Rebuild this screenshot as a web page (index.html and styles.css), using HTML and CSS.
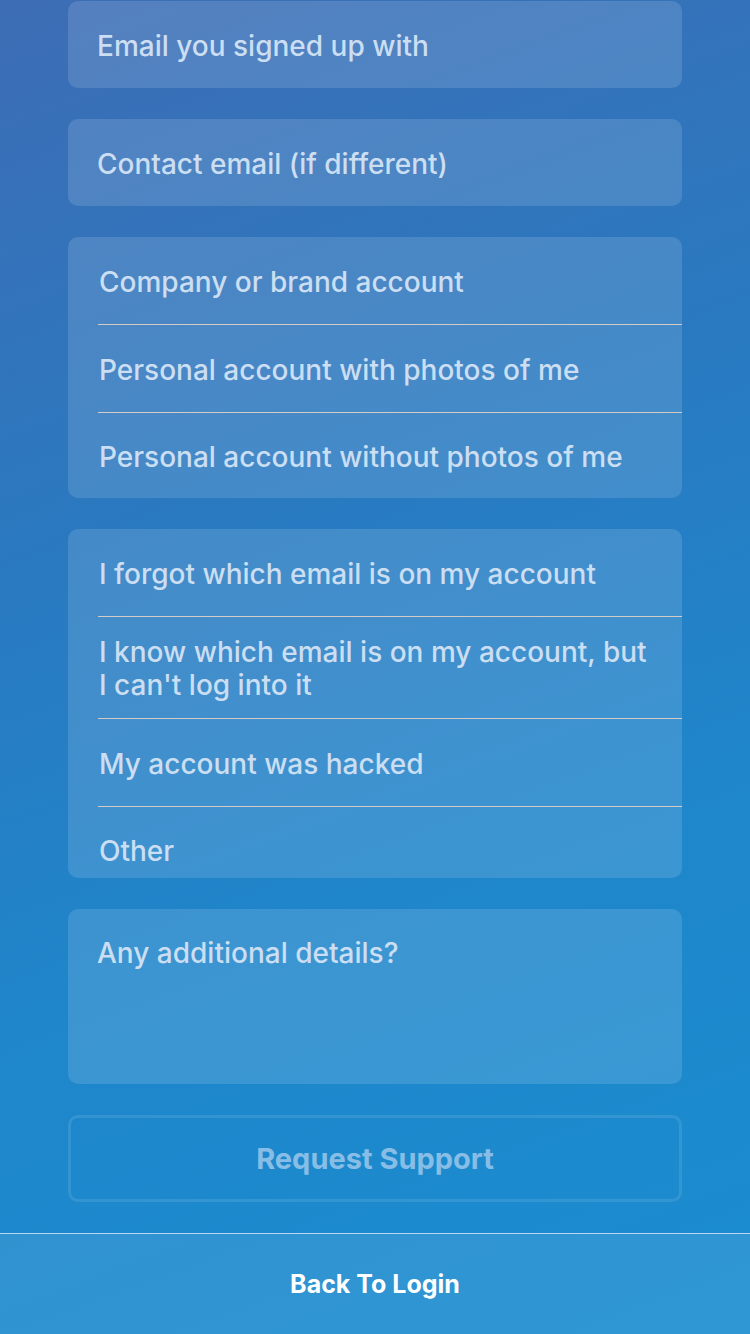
FILE: index.html
```html
<!DOCTYPE html>
<html>
<head>
<meta charset="utf-8">
<link rel="stylesheet" href="styles.css">
</head>
<body>
<div class="page">
  <main class="form">
    <div class="box field"><span class="ph">Email you signed up with</span></div>
    <div class="box field"><span class="ph">Contact email (if different)</span></div>
    <div class="box list">
      <div class="row">Company or brand account</div>
      <div class="row">Personal account with photos of me</div>
      <div class="row">Personal account without photos of me</div>
    </div>
    <div class="box list list-clip">
      <div class="row">I forgot which email is on my account</div>
      <div class="row">I know which email is on my account, but I can't log into it</div>
      <div class="row">My account was hacked</div>
      <div class="row">Other</div>
    </div>
    <div class="box area"><span class="ph">Any additional details?</span></div>
    <div class="btn">Request Support</div>
  </main>
  <footer class="footer">Back To Login</footer>
</div>
</body>
</html>
```

FILE: styles.css
```css
* { box-sizing: border-box; }
html, body { margin: 0; padding: 0; }
body {
  width: 750px;
  height: 1334px;
  overflow: hidden;
  font-family: Inter, Roboto, "Liberation Sans", sans-serif;
  background: linear-gradient(160deg, #3d6db5 0%, #2a79c0 35%, #1f86cb 65%, #1a8dd0 100%);
}
.page {
  height: 1334px;
  display: flex;
  flex-direction: column;
}
.form {
  flex: 1;
  padding: 1px 68px 0;
  display: flex;
  flex-direction: column;
  gap: 31px;
}
.box {
  background: rgba(255, 255, 255, 0.13);
  border-radius: 10px;
  color: #cbdef2;
  font-size: 28px;
  font-weight: 500;
  line-height: 33px;
}
.field {
  height: 87px;
  padding: 3px 29px 0;
  display: flex;
  align-items: center;
}
.list {
  padding-left: 30px;
}
.list-clip {
  height: 349px;
  overflow: hidden;
}
.row {
  min-height: 88px;
  padding: 19px 30px 16px 1px;
  display: flex;
  align-items: center;
  border-bottom: 1px solid #d4cbc6;
}
.row:last-child {
  border-bottom: none;
  min-height: 85px;
}
.area {
  height: 175px;
  padding: 28px 29px;
}
.btn {
  height: 87px;
  border: 3px solid rgba(255, 255, 255, 0.1);
  border-radius: 10px;
  display: flex;
  align-items: center;
  justify-content: center;
  font-weight: 700;
  font-size: 29px;
  color: #88bde6;
}
.footer {
  height: 101px;
  border-top: 1px solid #b9d6ee;
  background: rgba(255, 255, 255, 0.09);
  display: flex;
  align-items: center;
  justify-content: center;
  color: #ffffff;
  font-weight: 700;
  font-size: 25px;
}
```
